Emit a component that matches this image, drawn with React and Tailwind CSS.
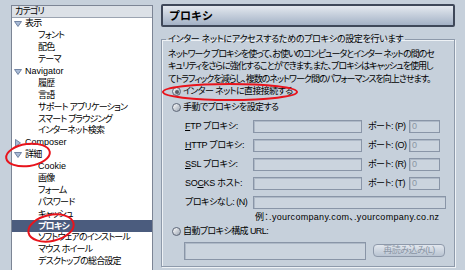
import React from 'react';

const tree = [
  { label: '表示', open: true, children: ['フォント', '配色', 'テーマ'] },
  {
    label: 'Navigator',
    open: true,
    children: ['履歴', '言語', 'サポート アプリケーション', 'スマート ブラウジング', 'インターネット検索'],
  },
  { label: 'Composer', open: false, children: [] },
  {
    label: '詳細',
    open: true,
    children: ['Cookie', '画像', 'フォーム', 'パスワード', 'キャッシュ', 'プロキシ', 'ソフトウェアのインストール', 'マウス ホイール', 'デスクトップの総合設定'],
  },
];

const Arrow = ({ open }) => (
  <svg width="8" height="8" viewBox="0 0 8 8" className="shrink-0">
    {open ? (
      <path d="M0.5 1.5 L7.5 1.5 L4 6.5 Z" fill="#a9bbd6" stroke="#5b6f92" strokeWidth="0.8" />
    ) : (
      <path d="M1.5 0.5 L6.5 4 L1.5 7.5 Z" fill="#a9bbd6" stroke="#5b6f92" strokeWidth="0.8" />
    )}
  </svg>
);

const Radio = ({ checked }) => (
  <span className="w-[9px] h-[9px] rounded-full border border-[#5d6677] bg-gradient-to-br from-white to-[#9ea7b4] flex items-center justify-center shrink-0">
    {checked && <span className="w-[4px] h-[4px] rounded-full bg-[#5a5f68]" />}
  </span>
);

const Field = ({ w, value }) => (
  <div className={`${w} h-[13px] border border-[#8995a7] bg-[#cbd4de] shadow-[inset_1px_1px_0_#aeb9c7] text-[#8a94a3] pl-[2px] leading-[11px] shrink-0`}>
    {value}
  </div>
);

const Mn = ({ c }) => <span className="underline underline-offset-1">{c}</span>;

const proxyRows = [
  { label: <><Mn c="F" />TP プロキシ:</>, key: '(P)' },
  { label: <><Mn c="H" />TTP プロキシ:</>, key: '(O)' },
  { label: <><Mn c="S" />SL プロキシ:</>, key: '(R)' },
  { label: <>SO<Mn c="C" />KS ホスト:</>, key: '(T)' },
];

export default function App() {
  return (
    <div className="relative w-[465px] h-[270px] overflow-hidden bg-[#c6d0db] flex text-[9px] text-black whitespace-nowrap font-['Liberation_Sans','Noto_Sans_CJK_JP',sans-serif] [font-feature-settings:'palt']">
      {/* category list */}
      <div className="w-[161px] shrink-0 pl-[11px] pt-[5px]">
        <div className="w-[142px] h-[280px] bg-white border border-[#7c8595] tracking-[-0.8px]">
          <div className="h-[12px] bg-[#dce1e7] border-b border-[#9ba4b1] pl-[3px] leading-[11px]">カテゴリ</div>
          {tree.map((g) => (
            <React.Fragment key={g.label}>
              <div className="h-[11.9px] flex items-center pl-[2px] gap-[3px] leading-none">
                <Arrow open={g.open} />
                <span className={/^[A-Z]/.test(g.label) ? 'tracking-normal' : ''}>{g.label}</span>
              </div>
              {g.children.map((c) => {
                const sel = c === 'プロキシ';
                return (
                  <div
                    key={c}
                    className={`h-[11.9px] flex items-center pl-[26px] leading-none ${c === 'Cookie' ? 'tracking-normal' : ''} ${sel ? 'bg-[#4b5c7e] text-white font-bold' : ''}`}
                  >
                    {c}
                  </div>
                );
              })}
            </React.Fragment>
          ))}
        </div>
      </div>

      {/* settings panel */}
      <div className="w-[294px] shrink-0 pt-[4px]">
        <div className="h-[23px] rounded-[2px] border-2 border-[#3f4859] bg-gradient-to-b from-[#e4e9ef] to-[#a4b2c6] flex items-center pl-[6px]">
          <span className="text-[11px] font-bold [font-feature-settings:normal] font-['Noto_Sans_CJK_JP',sans-serif]">プロキシ</span>
        </div>

        <fieldset className="mt-[6px] border border-[#8e9aab] shadow-[inset_1px_1px_0_#eef2f6,1px_1px_0_#eef2f6] pb-[6px]">
          <legend className="ml-[4px] px-[2px] leading-[12px] tracking-[-0.3px]">インター ネットにアクセスするためのプロキシの設定を行います</legend>

          <div className="mt-[3px] pl-[6px] leading-[12.3px] tracking-[-1px]">
            <div>ネットワーク プロキシを使って、お使いのコンピュータとインター ネットの間のセ</div>
            <div>キュリティをさらに強化することができます。また、プロキシはキャッシュを使用し</div>
            <div>てトラフィックを減らし、複数のネットワーク間のパフォーマンスを向上させます。</div>
          </div>

          <div className="h-[14px] flex items-center pl-[10px] gap-[2px] tracking-[-0.6px]">
            <Radio checked />
            <span>インター ネットに直接接続する</span>
          </div>
          <div className="mt-[2px] h-[14px] flex items-center pl-[10px] gap-[2px] tracking-[-0.6px]">
            <Radio />
            <span>手動でプロキシを設定する</span>
          </div>

          <div className="mt-[5px] pl-[23px] flex flex-col gap-[6px]">
            {proxyRows.map((r) => (
              <div key={r.key} className="flex items-center h-[13px]">
                <span className="w-[68px] shrink-0 tracking-[-0.3px]">{r.label}</span>
                <Field w="w-[109px]" />
                <span className="w-[47px] pl-[6px] shrink-0 tracking-[-0.5px]">ポート: {r.key}</span>
                <Field w="w-[31px]" value="0" />
              </div>
            ))}
            <div className="flex items-center h-[13px]">
              <span className="w-[68px] shrink-0 tracking-[-0.5px]">プロキシなし: (N)</span>
              <Field w="w-[193px]" />
            </div>
          </div>

          <div className="mt-[2px] h-[12px] leading-[12px] pl-[93px] tracking-[0.3px]">例：.yourcompany.com、.yourcompany.co.nz</div>

          <div className="mt-[3px] h-[12px] flex items-center pl-[10px] gap-[2px] tracking-[-0.6px]">
            <Radio />
            <span>自動プロキシ構成 URL:</span>
          </div>

          <div className="mt-[4px] flex items-center pl-[22px] gap-[7px]">
            <div className="w-[182px] h-[18px] border border-[#8995a7] bg-[#cbd4de] shadow-[inset_1px_1px_0_#aeb9c7]" />
            <div className="w-[72px] h-[13px] rounded-[4px] border border-[#8e99aa] bg-gradient-to-b from-[#e2e7ee] to-[#b9c4d2] text-[#8a95a5] flex items-center justify-center leading-none tracking-[-0.5px]">
              再読み込み(L)
            </div>
          </div>
        </fieldset>
      </div>

      {/* red annotation circles */}
      <svg className="absolute inset-0 pointer-events-none" width="465" height="270" viewBox="0 0 465 270">
        <ellipse cx="28" cy="155" rx="22" ry="11" transform="rotate(-8 28 155)" fill="none" stroke="#e8141c" strokeWidth="2" />
        <ellipse cx="51" cy="228" rx="23" ry="13" transform="rotate(-12 51 228)" fill="none" stroke="#e8141c" strokeWidth="2" />
        <ellipse cx="230" cy="92" rx="67" ry="8" fill="none" stroke="#e8141c" strokeWidth="2" />
      </svg>
    </div>
  );
}
